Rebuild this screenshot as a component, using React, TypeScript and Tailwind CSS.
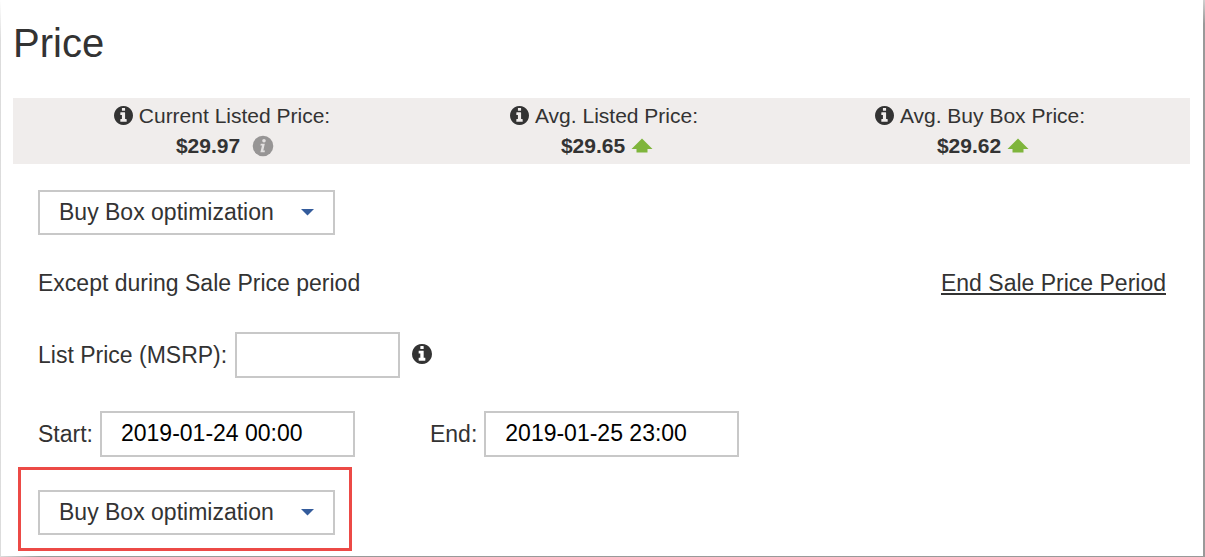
const stats = [
  { label: "Current Listed Price:", value: "$29.97", trend: "none" },
  { label: "Avg. Listed Price:", value: "$29.65", trend: "up" },
  { label: "Avg. Buy Box Price:", value: "$29.62", trend: "up" },
];

function InfoIcon({ size }: { size: number }) {
  return (
    <svg className="mb-0.5" width={size} height={size} viewBox="0 0 1536 1536" fill="currentColor">
      <path d="M1024 1248v-160q0-14-9-23t-23-9h-96v-512q0-14-9-23t-23-9h-320q-14 0-23 9t-9 23v160q0 14 9 23t23 9h96v320h-96q-14 0-23 9t-9 23v160q0 14 9 23t23 9h448q14 0 23-9t9-23zm-128-896v-160q0-14-9-23t-23-9h-192q-14 0-23 9t-9 23v160q0 14 9 23t23 9h192q14 0 23-9t9-23zm640 416q0 209-103 385.5t-279.5 279.5-385.5 103-385.5-103-279.5-279.5-103-385.5 103-385.5 279.5-279.5 385.5-103 385.5 103 279.5 279.5 103 385.5z" />
    </svg>
  );
}

function UpArrow() {
  return (
    <svg className="mb-0.5 ml-1.5" width="22" height="15" viewBox="0 0 22 15">
      <path d="M11 0.5 L21.5 11 H16.5 V14.5 H5.5 V11 H0.5 Z" fill="#7fb53c" />
    </svg>
  );
}

function GrayInfo() {
  return (
    <svg className="ml-3" width="22" height="22" viewBox="0 0 22 22">
      <circle cx="11" cy="11" r="10.3" fill="#979595" />
      <circle cx="12" cy="5.8" r="1.8" fill="#e2e0e0" />
      <path d="M8.8 8.8 H12.8 L11.3 15.4 H13 L12.6 17.3 H8.4 L10 10.4 H8.4 Z" fill="#e2e0e0" />
    </svg>
  );
}

function StrategySelect({ label }: { label: string }) {
  return (
    <div className="relative w-[297px]">
      <select
        aria-label={label}
        className="block h-[45px] w-full appearance-none border-2 border-[#c8c8c8] bg-white px-[19px] pb-0.5 text-[#333]"
      >
        <option>Buy Box optimization</option>
      </select>
      <svg
        className="pointer-events-none absolute top-[19px] right-[21px]"
        width="13"
        height="7"
        viewBox="0 0 13 7"
      >
        <path d="M0 0 H13 L6.5 6.5 Z" fill="#345c9c" />
      </svg>
    </div>
  );
}

export default function App() {
  return (
    <div className="flex min-h-screen flex-col bg-white font-['Liberation_Sans',Arial,sans-serif] text-[23px] leading-[30px] text-[#333]">
      <div className="flex flex-1">
        <div className="w-px bg-linear-to-b from-white to-[#dcdcdc] to-[40px]" />

        <main className="flex-1 pt-[19px] pr-[13px] pb-[5px] pl-3">
          <h1 className="text-[40px] leading-[48px]">Price</h1>

          <div className="mt-[31px] grid grid-cols-[418fr_346fr_406fr] bg-[#f0edec] py-[3px] pr-[7px] text-[21px]">
            {stats.map((stat) => (
              <div key={stat.label} className="flex flex-col items-center">
                <div className="flex items-center gap-1.5">
                  <InfoIcon size={19} />
                  <span>{stat.label}</span>
                </div>
                <div className="flex items-center pl-1.5">
                  <strong>{stat.value}</strong>
                  {stat.trend === "up" ? <UpArrow /> : <GrayInfo />}
                </div>
              </div>
            ))}
          </div>

          <form className="flex flex-col pt-[26px] pr-6 pl-[25px]">
            <StrategySelect label="Pricing strategy" />

            <div className="mt-[33px] flex items-center justify-between">
              <p>Except during Sale Price period</p>
              <a href="#" className="underline decoration-2 underline-offset-2">
                End Sale Price Period
              </a>
            </div>

            <div className="mt-[34px] flex items-center">
              <label htmlFor="msrp">List Price (MSRP):</label>
              <input
                id="msrp"
                type="text"
                className="ml-2 h-[46px] w-[165px] border-2 border-[#c8c8c8] px-[19px] text-black"
              />
              <span className="ml-3">
                <InfoIcon size={20} />
              </span>
            </div>

            <div className="mt-[33px] flex items-center">
              <label htmlFor="start">Start:</label>
              <input
                id="start"
                type="text"
                defaultValue="2019-01-24 00:00"
                className="ml-[7px] h-[46px] w-[255px] border-2 border-[#c8c8c8] px-[19px] pb-0.5 text-black"
              />
              <label htmlFor="end" className="ml-[75px]">
                End:
              </label>
              <input
                id="end"
                type="text"
                defaultValue="2019-01-25 23:00"
                className="ml-[7px] h-[46px] w-[255px] border-2 border-[#c8c8c8] px-[19px] pb-0.5 text-black"
              />
            </div>

            <div className="mt-2.5 -ml-5 self-start border-3 border-[#ec4a46] pt-5 pr-3.5 pb-[13px] pl-[17px]">
              <StrategySelect label="Sale pricing strategy" />
            </div>
          </form>
        </main>

        <div className="w-0.5 bg-linear-to-b from-[#d0d0d0] to-[#999] to-[24px]" />
      </div>
      <div className="h-px bg-linear-to-r from-[#dcdcdc] to-[#999] to-[40px]" />
    </div>
  );
}
